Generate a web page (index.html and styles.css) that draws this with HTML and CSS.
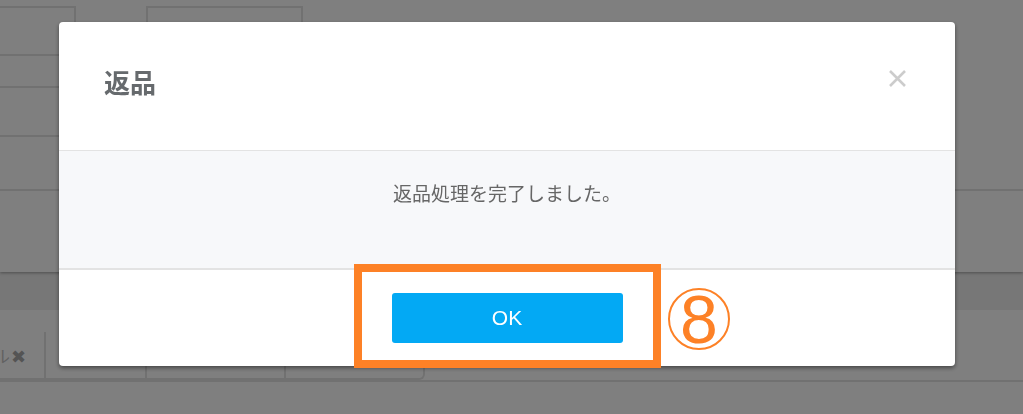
FILE: index.html
```html
<!DOCTYPE html>
<html lang="ja">
<head>
    <meta charset="UTF-8">
    <meta name="viewport" content="width=device-width, initial-scale=1.0">
    <title>返品</title>
    <link rel="stylesheet" href="styles.css">
</head>
<body>

<!-- page behind the dialog -->
<div class="page">
    <div class="form-area">
        <div class="row-top">
            <div class="cell-a"></div>
            <div class="cell-b"><span class="cell-text">米</span></div>
        </div>
        <div class="rows">
            <div class="row row-1"></div>
            <div class="row row-2"></div>
        </div>
        <div class="row-wide"></div>
    </div>
    <div class="bar"></div>
    <div class="actions">
        <div class="btn-group">
            <div class="seg seg-first">キャンセル<span class="seg-x">✖</span></div>
            <div class="seg seg-2"></div>
            <div class="seg seg-3"></div>
            <div class="seg seg-4"></div>
        </div>
    </div>
    <div class="bottom-line"></div>
</div>

<div class="overlay">
    <div class="modal">
        <div class="modal-header">
            <h2 class="modal-title">返品</h2>
            <button class="modal-close" aria-label="close">
                <svg width="19" height="19" viewBox="0 0 19 19">
                    <path d="M2 2 L17 17 M17 2 L2 17" stroke="#cccccc" stroke-width="2.6" fill="none"/>
                </svg>
            </button>
        </div>
        <div class="modal-body">
            <p>返品処理を完了しました。</p>
        </div>
        <div class="modal-footer">
            <button class="ok-button">OK</button>
        </div>
    </div>

    <!-- annotation -->
    <div class="mark-box"></div>
    <div class="mark-num">8</div>
</div>

</body>
</html>
```

FILE: styles.css
```css
body {
    margin: 0;
    font-family: "Noto Sans CJK JP", "Liberation Sans", sans-serif;
    background-color: white;
    overflow: hidden;
}
.page {
    width: 1023px;
    height: 414px;
}
.form-area {
    height: 272px;
    padding-top: 6px;
    box-sizing: border-box;
    background-color: white;
    box-shadow: 0 1px 3px rgba(0, 0, 0, 0.35);
    position: relative;
}
.row-top {
    display: flex;
    height: 50px;
}
.cell-a {
    width: 76px;
    border: 2px solid #e2e2e2;
    border-left: none;
    box-sizing: border-box;
}
.cell-b {
    margin-left: 70px;
    width: 157px;
    height: 80px;
    border: 2px solid #e2e2e2;
    border-bottom: none;
    box-sizing: border-box;
    padding: 10px 0 0 24px;
}
.cell-text {
    font-size: 16px;
    color: #333;
}
.rows {
    width: 300px;
}
.row {
    border-bottom: 2px solid #e2e2e2;
}
.row-1 {
    height: 30px;
}
.row-2 {
    height: 47px;
}
.row-wide {
    height: 52px;
    border-bottom: 2px solid #e2e2e2;
}
.bar {
    height: 38px;
    background-color: #eeeeee;
}
.actions {
    padding-top: 22px;
    height: 70px;
    box-sizing: border-box;
}
.btn-group {
    display: flex;
    margin-left: -60px;
    width: 485px;
    height: 48px;
    border: 2px solid #e2e2e2;
    border-top: none;
    border-radius: 0 0 6px 0;
    box-sizing: border-box;
}
.seg {
    border-right: 2px solid #e2e2e2;
    box-sizing: border-box;
}
.seg:last-child {
    border-right: none;
}
.seg-first {
    width: 104px;
    font-size: 17px;
    color: #c4c4c4;
    display: flex;
    align-items: center;
    justify-content: flex-end;
    padding-right: 18px;
    white-space: nowrap;
    overflow: hidden;
}
.seg-x {
    color: #a8a8a8;
    font-size: 18px;
    margin-left: 1px;
}
.seg-2 {
    width: 101px;
}
.seg-3 {
    width: 139px;
}
.seg-4 {
    flex: 1;
}
.bottom-line {
    margin-top: 0;
    border-top: 2px solid #e2e2e2;
}

/* dialog */
.overlay {
    position: fixed;
    top: 0;
    left: 0;
    right: 0;
    bottom: 0;
    background-color: rgba(0, 0, 0, 0.5);
    padding-top: 22px;
}
.modal {
    margin-left: 59px;
    width: 896px;
    background-color: white;
    border-radius: 4px;
    box-shadow: 0 2px 4px rgba(0, 0, 0, 0.45);
    overflow: hidden;
}
.modal-header {
    height: 129px;
    display: flex;
    align-items: center;
    justify-content: space-between;
    padding: 0 48px 10px 45px;
    box-sizing: border-box;
    border-bottom: 1px solid #e3e3e3;
}
.modal-title {
    margin: 0;
    font-size: 26px;
    font-weight: bold;
    color: #666a6d;
}
.modal-close {
    background: none;
    border: none;
    padding: 0;
    margin-bottom: 6px;
    width: 19px;
    height: 19px;
    cursor: pointer;
}
.modal-body {
    height: 119px;
    box-sizing: border-box;
    background-color: #f7f8fa;
    border-bottom: 2px solid #e3e3e3;
    text-align: center;
    padding-top: 28px;
}
.modal-body p {
    margin: 0;
    font-size: 19px;
    line-height: 28px;
    color: #666666;
}
.modal-footer {
    height: 96px;
    display: flex;
    align-items: center;
    justify-content: center;
}
.ok-button {
    width: 231px;
    height: 50px;
    background-color: #03a9f4;
    border: none;
    border-radius: 3px;
    color: white;
    font-family: "Liberation Sans", Arial, sans-serif;
    font-size: 21px;
    cursor: pointer;
}

/* annotation */
.mark-box {
    position: absolute;
    left: 354px;
    top: 264px;
    width: 307px;
    height: 104px;
    border: 8px solid #fd8126;
    box-sizing: border-box;
}
.mark-num {
    position: absolute;
    left: 668px;
    top: 288px;
    width: 62px;
    height: 62px;
    border: 2px solid #fd8126;
    border-radius: 50%;
    box-sizing: border-box;
    color: #fd8126;
    font-family: "Liberation Sans", Arial, sans-serif;
    font-size: 68px;
    line-height: 58px;
    text-align: center;
}
```
